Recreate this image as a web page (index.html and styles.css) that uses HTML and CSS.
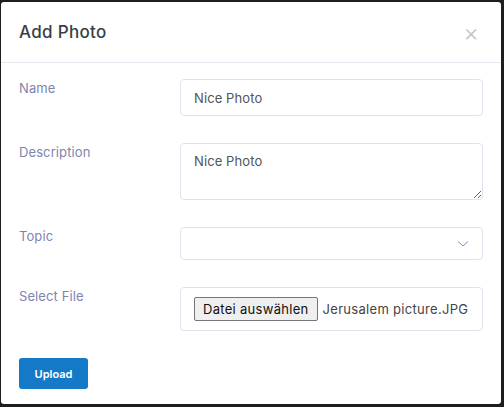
FILE: index.html
```html
<!DOCTYPE html>
<html lang="en">
<head>
    <meta charset="UTF-8">
    <meta name="viewport" content="width=device-width, initial-scale=1.0">
    <title>Add Photo</title>
    <link rel="stylesheet" href="styles.css">
</head>
<body>
    <!-- Modal -->
    <div class="modal">
        <div class="modal-header">
            <h3>Add Photo</h3>
            <span class="close">&times;</span>
        </div>
        <form class="modal-body">
            <div class="row">
                <label for="name">Name</label>
                <input type="text" id="name" class="field field-input" value="Nice Photo" />
            </div>
            <div class="row">
                <label for="desc">Description</label>
                <textarea id="desc" class="field field-text">Nice Photo</textarea>
            </div>
            <div class="row">
                <label for="topic">Topic</label>
                <div class="select-wrap">
                    <select id="topic" class="field field-select">
                        <option></option>
                    </select>
                    <svg class="chevron" width="12" height="8" viewBox="0 0 12 8"><path d="M1 1.5l5 4.5 5-4.5" fill="none" stroke="#8a8fbd" stroke-width="1"/></svg>
                </div>
            </div>
            <div class="row">
                <label>Select File</label>
                <div class="field field-file">
                    <span class="file-btn">Datei auswählen</span>
                    <span class="file-name">Jerusalem picture.JPG</span>
                </div>
            </div>
            <button type="button" class="upload">Upload</button>
        </form>
    </div>
</body>
</html>
```

FILE: styles.css
```css
body {
    margin: 0;
    background-color: #1e1e1e;
    font-family: Inter, "Open Sans", Arial, sans-serif;
}
.modal {
    width: 500px;
    height: 402px;
    margin: 2px 0 0 1px;
    background-color: #fff;
    border-radius: 3px;
    box-sizing: border-box;
}
.modal-header {
    height: 61px;
    box-sizing: border-box;
    border-bottom: 1px solid #e9e8f1;
    display: flex;
    align-items: center;
    justify-content: space-between;
    padding: 0 22px 0 18px;
}
.modal-header h3 {
    margin: 0;
    font-size: 17px;
    font-weight: 500;
    color: #3a3f45;
    letter-spacing: 0.3px;
}
.close {
    font-size: 24px;
    font-weight: 300;
    color: #c4c4c4;
    line-height: 1;
    margin-top: 2px;
}
.modal-body {
    padding: 16px 18px 0 18px;
}
.row {
    display: grid;
    grid-template-columns: 161px 303px;
    margin-bottom: 27px;
}
.row label {
    font-size: 13px;
    color: #7e84b0;
    line-height: 16px;
    padding-top: 1px;
    letter-spacing: 0.1px;
}
.field {
    box-sizing: border-box;
    width: 303px;
    border: 1px solid #e2e2ee;
    border-radius: 4px;
    font-family: inherit;
    font-size: 13px;
    color: #4f555b;
    background-color: #fff;
    outline: none;
    letter-spacing: 0.1px;
}
.field-input {
    height: 37px;
    padding: 0 13px;
}
.field-text {
    height: 57px;
    padding: 9px 13px;
    resize: vertical;
    display: block;
}
.select-wrap {
    position: relative;
}
.field-select {
    height: 33px;
    appearance: none;
    -webkit-appearance: none;
    padding: 0 13px;
    display: block;
}
.chevron {
    position: absolute;
    right: 14px;
    top: 13px;
}
.field-file {
    height: 44px;
    display: flex;
    align-items: center;
    padding: 0 13px;
}
.file-btn {
    border: 1px solid #767676;
    border-radius: 2px;
    background-color: #efefef;
    color: #111;
    padding: 3px 8px;
    margin-right: 5px;
    font-size: 13px;
    letter-spacing: 0.3px;
}
.file-name {
    color: #444;
    letter-spacing: 0.3px;
}
.upload {
    background-color: #1479c7;
    color: #fff;
    border: none;
    border-radius: 3px;
    width: 69px;
    height: 31px;
    font-family: inherit;
    font-size: 11px;
    font-weight: 600;
    cursor: pointer;
}
```
